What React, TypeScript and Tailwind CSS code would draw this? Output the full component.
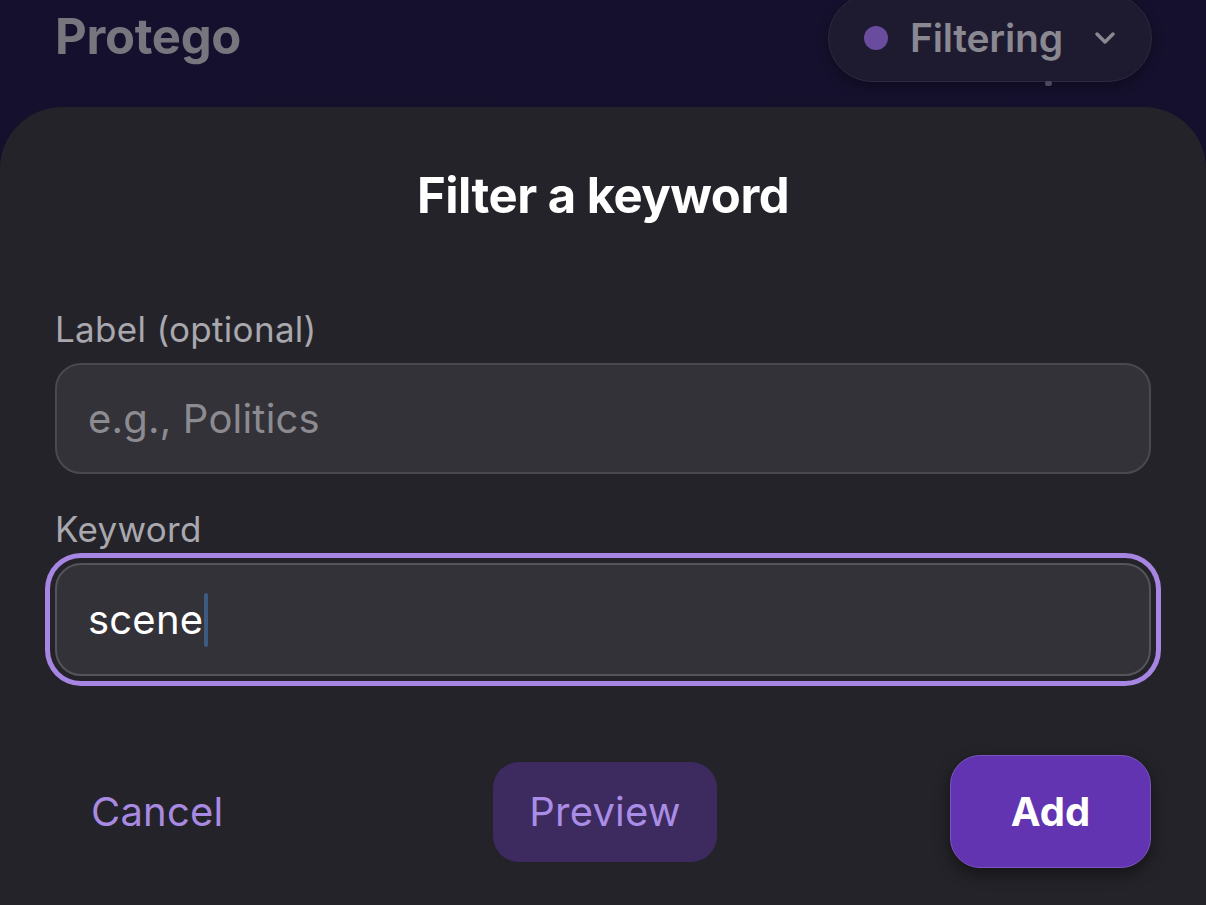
import React from "react";

export default function App() {
  const font = { fontFamily: "Inter, 'Noto Sans', sans-serif" };
  return (
    <div
      className="w-[1206px] h-[905px] overflow-hidden flex flex-col bg-gradient-to-b from-[#15102d] to-[#130f28]"
      style={font}
    >
      {/* header */}
      <div className="h-[107px] shrink-0 flex items-start justify-between pl-[55px] pr-[54px]">
        <div className="pt-[9px] text-[49px] font-bold tracking-[-0.3px] text-[#77757d] leading-[56px]">
          Protego
        </div>
        <div className="relative mt-[-6px]">
          <div className="h-[88px] w-[324px] rounded-full bg-[#1e1b31] border border-[#2c2940] flex items-center pl-[35px] shadow-[0_4px_12px_rgba(0,0,0,0.3)]">
            <span className="w-[24px] h-[24px] rounded-full bg-[#6a4c9e] shrink-0" />
            <span className="ml-[22px] text-[39px] font-semibold text-[#8a8891] tracking-[-0.2px]">
              Filtering
            </span>
            <svg
              className="ml-[30px]"
              width="24"
              height="16"
              viewBox="0 0 24 16"
              fill="none"
              stroke="#8a8891"
              strokeWidth="3.5"
              strokeLinecap="round"
              strokeLinejoin="round"
            >
              <path d="M4 4l8 8 8-8" />
            </svg>
          </div>
          <span className="absolute left-[217px] top-[87px] w-[7px] h-[5px] rounded-full bg-[#4b4860]" />
        </div>
      </div>

      {/* sheet */}
      <div className="flex-1 rounded-t-[62px] bg-[#242329] px-[55px] flex flex-col">
        <div className="pt-[62px] text-center text-[49px] font-bold text-white tracking-[-0.5px] leading-[54px]">
          Filter a keyword
        </div>

        <div className="mt-[86px] text-[35px] text-[#a9a8ae] leading-[40px] tracking-[0.3px]">
          Label (optional)
        </div>
        <div className="mt-[14px] h-[111px] rounded-[26px] bg-[#333238] border-2 border-[#4a494f] flex items-center pl-[31px]">
          <span className="text-[40px] text-[#8c8b91] tracking-[0.2px]">e.g., Politics</span>
        </div>

        <div className="mt-[35px] text-[35px] text-[#a9a8ae] leading-[40px] tracking-[0.3px]">
          Keyword
        </div>
        <div className="mt-[4px] -mx-[10px] p-[5px] rounded-[36px] bg-[#a785e2]">
          <div className="rounded-[31px] bg-[#242329] p-[5px]">
            <div className="h-[113px] rounded-[26px] bg-[#333238] border-2 border-[#55545a] flex items-center pl-[31px]">
              <span className="text-[40px] text-white tracking-[0.2px]">scene</span>
              <span className="ml-[1px] w-[4px] h-[54px] rounded-full bg-[#3d5a80]" />
            </div>
          </div>
        </div>

        <div className="mt-[69px] flex items-center pl-[36px]">
          <span className="w-[166px] text-[40px] text-[#a88ae2] tracking-[0.2px]">Cancel</span>
          <button className="ml-[236px] h-[100px] w-[224px] rounded-[26px] bg-[#3d2a5f] text-[40px] text-[#a98de6] tracking-[0.2px]">
            Preview
          </button>
          <button className="ml-auto h-[113px] w-[201px] rounded-[30px] bg-[#6234b1] border border-[#7a55c2] text-[40px] font-bold text-white shadow-[0_6px_16px_rgba(0,0,0,0.45)]">
            Add
          </button>
        </div>
      </div>
    </div>
  );
}
